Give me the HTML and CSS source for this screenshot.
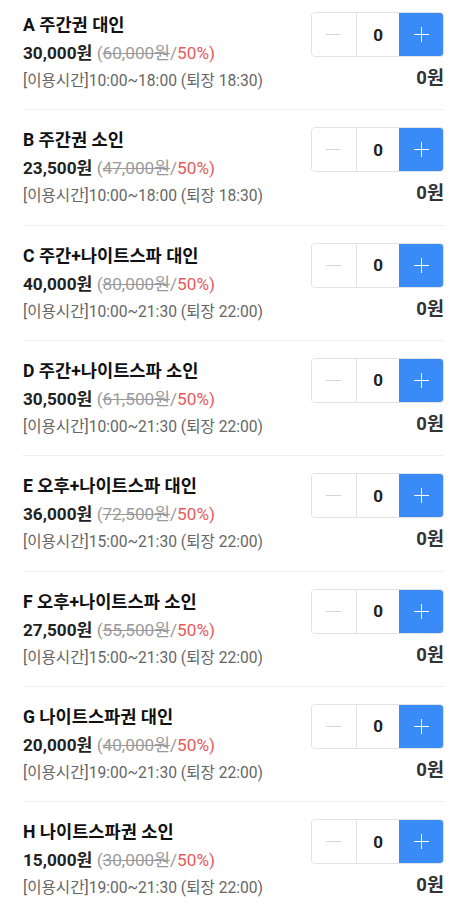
FILE: index.html
```html
<!DOCTYPE html>
<html lang="ko">
<head>
<meta charset="utf-8">
<link rel="stylesheet" href="styles.css">
</head>
<body>
<div class="list">
  <div class="item">
    <div class="info">
      <div class="title">A 주간권 대인</div>
      <div class="price"><b>30,000원</b> <span class="orig">(<s>60,000원</s>/</span><span class="rate">50%)</span></div>
      <div class="time">[이용시간]10:00~18:00 (퇴장 18:30)</div>
    </div>
    <div class="side">
      <div class="stepper"><button class="btn minus"><span></span></button><div class="qty">0</div><button class="btn plus"><span></span></button></div>
      <div class="total">0원</div>
    </div>
  </div>
  <div class="item">
    <div class="info">
      <div class="title">B 주간권 소인</div>
      <div class="price"><b>23,500원</b> <span class="orig">(<s>47,000원</s>/</span><span class="rate">50%)</span></div>
      <div class="time">[이용시간]10:00~18:00 (퇴장 18:30)</div>
    </div>
    <div class="side">
      <div class="stepper"><button class="btn minus"><span></span></button><div class="qty">0</div><button class="btn plus"><span></span></button></div>
      <div class="total">0원</div>
    </div>
  </div>
  <div class="item">
    <div class="info">
      <div class="title">C 주간+나이트스파 대인</div>
      <div class="price"><b>40,000원</b> <span class="orig">(<s>80,000원</s>/</span><span class="rate">50%)</span></div>
      <div class="time">[이용시간]10:00~21:30 (퇴장 22:00)</div>
    </div>
    <div class="side">
      <div class="stepper"><button class="btn minus"><span></span></button><div class="qty">0</div><button class="btn plus"><span></span></button></div>
      <div class="total">0원</div>
    </div>
  </div>
  <div class="item">
    <div class="info">
      <div class="title">D 주간+나이트스파 소인</div>
      <div class="price"><b>30,500원</b> <span class="orig">(<s>61,500원</s>/</span><span class="rate">50%)</span></div>
      <div class="time">[이용시간]10:00~21:30 (퇴장 22:00)</div>
    </div>
    <div class="side">
      <div class="stepper"><button class="btn minus"><span></span></button><div class="qty">0</div><button class="btn plus"><span></span></button></div>
      <div class="total">0원</div>
    </div>
  </div>
  <div class="item">
    <div class="info">
      <div class="title">E 오후+나이트스파 대인</div>
      <div class="price"><b>36,000원</b> <span class="orig">(<s>72,500원</s>/</span><span class="rate">50%)</span></div>
      <div class="time">[이용시간]15:00~21:30 (퇴장 22:00)</div>
    </div>
    <div class="side">
      <div class="stepper"><button class="btn minus"><span></span></button><div class="qty">0</div><button class="btn plus"><span></span></button></div>
      <div class="total">0원</div>
    </div>
  </div>
  <div class="item">
    <div class="info">
      <div class="title">F 오후+나이트스파 소인</div>
      <div class="price"><b>27,500원</b> <span class="orig">(<s>55,500원</s>/</span><span class="rate">50%)</span></div>
      <div class="time">[이용시간]15:00~21:30 (퇴장 22:00)</div>
    </div>
    <div class="side">
      <div class="stepper"><button class="btn minus"><span></span></button><div class="qty">0</div><button class="btn plus"><span></span></button></div>
      <div class="total">0원</div>
    </div>
  </div>
  <div class="item">
    <div class="info">
      <div class="title">G 나이트스파권 대인</div>
      <div class="price"><b>20,000원</b> <span class="orig">(<s>40,000원</s>/</span><span class="rate">50%)</span></div>
      <div class="time">[이용시간]19:00~21:30 (퇴장 22:00)</div>
    </div>
    <div class="side">
      <div class="stepper"><button class="btn minus"><span></span></button><div class="qty">0</div><button class="btn plus"><span></span></button></div>
      <div class="total">0원</div>
    </div>
  </div>
  <div class="item">
    <div class="info">
      <div class="title">H 나이트스파권 소인</div>
      <div class="price"><b>15,000원</b> <span class="orig">(<s>30,000원</s>/</span><span class="rate">50%)</span></div>
      <div class="time">[이용시간]19:00~21:30 (퇴장 22:00)</div>
    </div>
    <div class="side">
      <div class="stepper"><button class="btn minus"><span></span></button><div class="qty">0</div><button class="btn plus"><span></span></button></div>
      <div class="total">0원</div>
    </div>
  </div>
</div>
</body>
</html>
```
FILE: styles.css
```css
html, body {
  margin: 0;
  padding: 0;
  background: #fff;
}
body {
  font-family: Roboto, "Noto Sans CJK KR", sans-serif;
  color: #111;
  overflow: hidden;
}
.list {
  margin: -5px 22px 0 23px;
}
.item {
  box-sizing: border-box;
  height: 115.33px;
  padding-top: 17px;
  border-bottom: 1px solid #eeeeee;
  display: flex;
  justify-content: space-between;
  align-items: flex-start;
}
.info {
  display: flex;
  flex-direction: column;
}
.title {
  font-size: 17.6px;
  font-weight: 700;
  line-height: 27px;
  color: #111;
  white-space: nowrap;
}
.price {
  font-size: 17.2px;
  line-height: 28px;
  white-space: nowrap;
}
.price b {
  font-weight: 700;
  color: #222;
}
.orig {
  color: #9a9a9a;
}
.orig s {
  text-decoration-thickness: 1px;
}
.rate {
  color: #e85a5a;
}
.time {
  font-size: 15.6px;
  line-height: 28px;
  color: #666;
  white-space: nowrap;
}
.side {
  display: flex;
  flex-direction: column;
  align-items: flex-end;
}
.stepper {
  display: flex;
  height: 45px;
  width: 133px;
  box-sizing: border-box;
  border: 1px solid #e2e2e2;
  border-radius: 4px;
  overflow: hidden;
}
.btn {
  width: 44px;
  height: 100%;
  border: 0;
  padding: 0;
  margin: 0;
  background: #fff;
  display: flex;
  align-items: center;
  justify-content: center;
  position: relative;
}
.qty {
  width: 43px;
  border-left: 1px solid #e2e2e2;
  display: flex;
  align-items: center;
  justify-content: center;
  font-size: 17px;
  font-weight: 700;
  color: #222;
}
.minus span {
  display: block;
  width: 15px;
  height: 1px;
  background: #d4d4d4;
}
.plus {
  background: #3a8bf8;
  width: 45px;
  margin-right: -1px;
  margin-top: -1px;
  margin-bottom: -1px;
  height: 45px;
}
.plus span {
  display: block;
  width: 15px;
  height: 1px;
  background: #fff;
  position: relative;
}
.plus span::after {
  content: "";
  position: absolute;
  left: 7px;
  top: -7px;
  width: 1px;
  height: 15px;
  background: #fff;
}
.total {
  margin-top: 7px;
  font-size: 18.5px;
  font-weight: 700;
  line-height: 28px;
  color: #333;
}
```
